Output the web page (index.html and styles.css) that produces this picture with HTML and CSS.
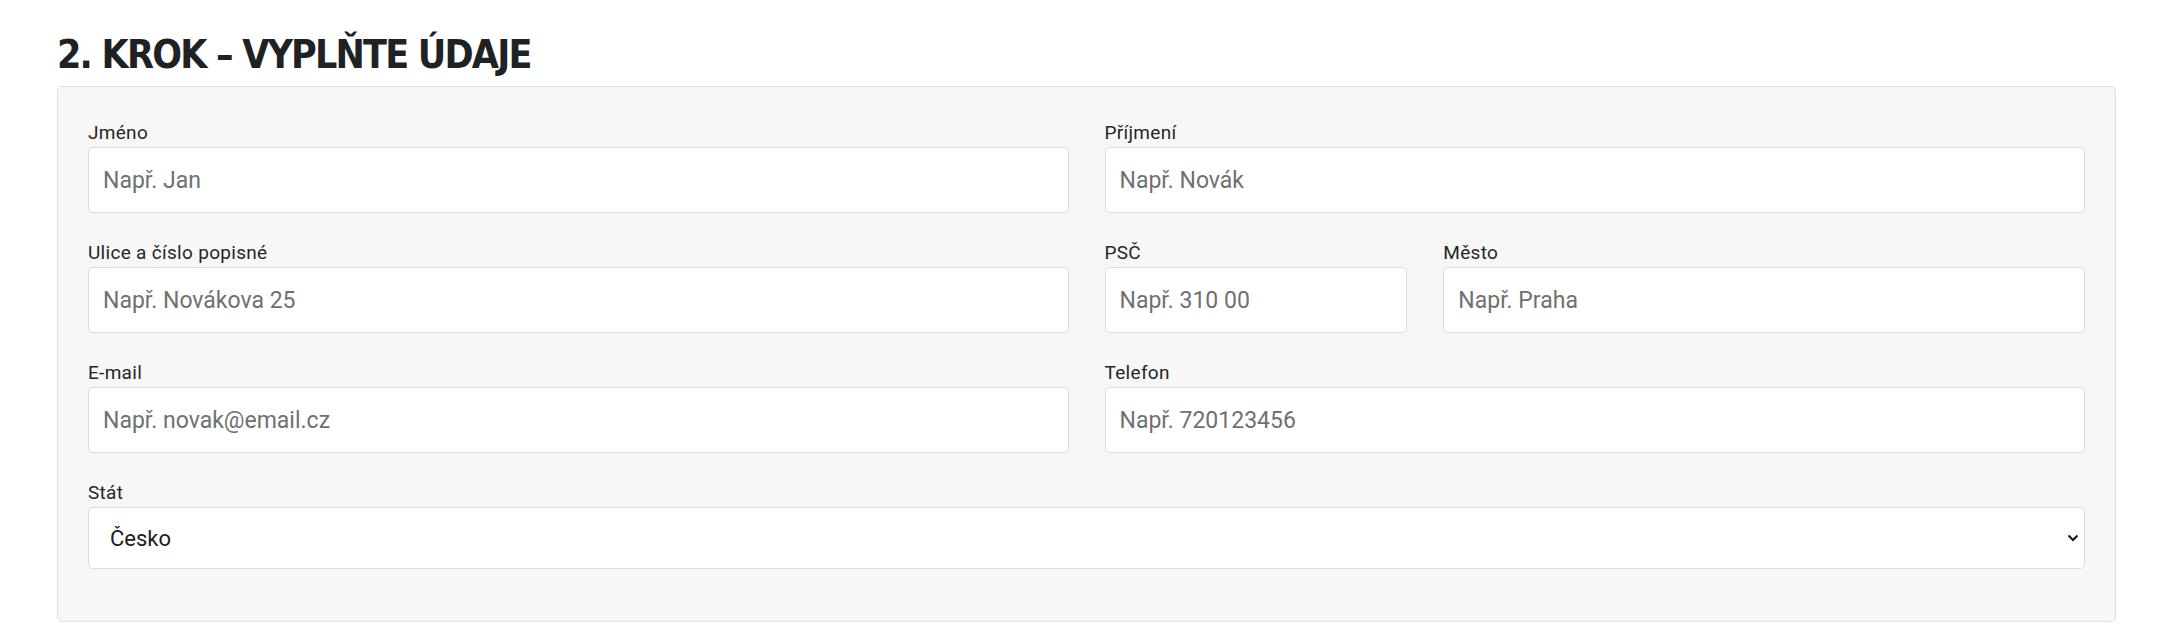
FILE: index.html
```html
<!DOCTYPE html>
<html lang="cs">
<head>
    <meta charset="UTF-8">
    <meta name="viewport" content="width=device-width, initial-scale=1.0">
    <title>Objednávka - údaje</title>
    <link rel="stylesheet" href="styles.css">
</head>
<body>

    <div class="container">
        <h2 class="step-title">2. krok – vyplňte údaje</h2>

        <form class="panel">
            <div class="fields">
                <div class="field">
                    <label for="first-name">Jméno</label>
                    <input type="text" id="first-name" placeholder="Např. Jan">
                </div>
                <div class="field">
                    <label for="last-name">Příjmení</label>
                    <input type="text" id="last-name" placeholder="Např. Novák">
                </div>

                <div class="field">
                    <label for="street">Ulice a číslo popisné</label>
                    <input type="text" id="street" placeholder="Např. Novákova 25">
                </div>
                <div class="split">
                    <div class="field">
                        <label for="zip">PSČ</label>
                        <input type="text" id="zip" placeholder="Např. 310 00">
                    </div>
                    <div class="field">
                        <label for="city">Město</label>
                        <input type="text" id="city" placeholder="Např. Praha">
                    </div>
                </div>

                <div class="field">
                    <label for="email">E-mail</label>
                    <input type="email" id="email" placeholder="Např. novak@email.cz">
                </div>
                <div class="field">
                    <label for="phone">Telefon</label>
                    <input type="tel" id="phone" placeholder="Např. 720123456">
                </div>

                <div class="field wide">
                    <label for="country">Stát</label>
                    <div class="select-wrap">
                        <select id="country">
                            <option>Česko</option>
                            <option>Slovensko</option>
                        </select>
                        <svg class="chevron" width="12" height="8" viewBox="0 0 12 8">
                            <path d="M1.5 1.5 6 6 10.5 1.5" fill="none" stroke="#111" stroke-width="2"/>
                        </svg>
                    </div>
                </div>
            </div>
        </form>
    </div>

</body>
</html>
```

FILE: styles.css
```css
body {
    margin: 0;
    padding: 31px 54px 0 57px;
    background: #fff;
    font-family: Roboto, "Noto Sans", sans-serif;
    color: #2a2a2a;
}
.step-title {
    margin: 0 0 7px;
    font-family: "DejaVu Sans Condensed", "DejaVu Sans", Roboto, sans-serif;
    font-stretch: condensed;
    font-size: 39px;
    line-height: 48px;
    font-weight: 700;
    letter-spacing: -1.8px;
    text-transform: uppercase;
    color: #1f2225;
}
.panel {
    background: #f7f7f7;
    border: 1px solid #e0e0e0;
    border-radius: 5px;
    padding: 34px 30px 52px;
}
.fields {
    display: grid;
    grid-template-columns: 1fr 1fr;
    column-gap: 36px;
    row-gap: 28px;
}
.split {
    display: grid;
    grid-template-columns: calc((100% + 36px) / 3 - 36px) 1fr;
    column-gap: 36px;
}
.wide {
    grid-column: 1 / -1;
}
.field label {
    display: block;
    margin-bottom: 2px;
    font-size: 19px;
    line-height: 24px;
    letter-spacing: 0.3px;
    color: #262626;
}
.field input {
    display: block;
    box-sizing: border-box;
    width: 100%;
    height: 66px;
    margin: 0;
    padding: 0 14px;
    border: 1px solid #dddddd;
    border-radius: 5px;
    background: #fff;
    font-family: Roboto, "Noto Sans", sans-serif;
    font-size: 23px;
    color: #222;
}
.field input::placeholder {
    color: #707070;
}
.select-wrap {
    position: relative;
}
.select-wrap select {
    display: block;
    box-sizing: border-box;
    width: 100%;
    height: 62px;
    margin: 0;
    padding: 0 40px 0 21px;
    border: 1px solid #dddddd;
    border-radius: 5px;
    background: #fff;
    -webkit-appearance: none;
    appearance: none;
    font-family: Roboto, "Noto Sans", sans-serif;
    font-size: 22px;
    color: #1c1c1c;
}
.chevron {
    position: absolute;
    right: 6px;
    top: 27px;
    pointer-events: none;
}
```
